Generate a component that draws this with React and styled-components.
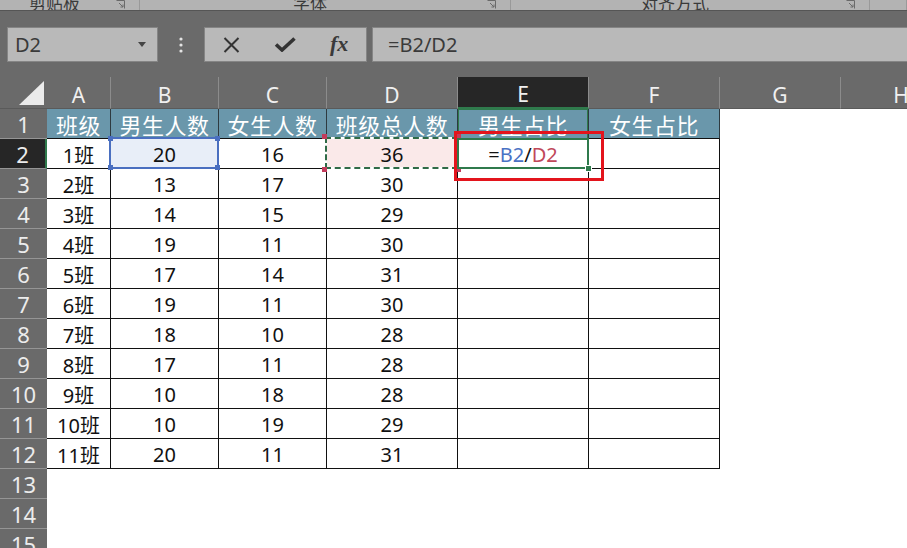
import React from 'react'
import styled, { createGlobalStyle, css } from 'styled-components'

const GlobalStyle = createGlobalStyle`
  html, body {
    margin: 0;
    padding: 0;
  }
  body {
    background: #6a6a6a;
    font-family: "Noto Sans", "Noto Sans CJK SC", sans-serif;
    overflow: hidden;
  }
`

const Window = styled.div`
  width: 907px;
  height: 548px;
  overflow: hidden;
  display: flex;
  flex-direction: column;
  background: #6a6a6a;
`

// ribbon strip (only the bottom of the group captions is visible)
const Ribbon = styled.div`
  height: 10px;
  flex: none;
  display: flex;
  background: #b3b3b3;
  border-bottom: 1px solid #555;
  overflow: hidden;
`

const Group = styled.div`
  flex: ${p => (p.$w ? 'none' : '1')};
  width: ${p => (p.$w ? `${p.$w}px` : 'auto')};
  display: flex;
  align-items: flex-end;
  border-right: 1px solid #999;
`

const GroupLabel = styled.span`
  flex: 1;
  text-align: center;
  font-family: "Noto Sans CJK SC", sans-serif;
  font-size: 17px;
  line-height: 20px;
  color: #3a3a3a;
  margin-bottom: -3px;
`

const LauncherIcon = styled.svg`
  flex: none;
  width: 9px;
  height: 9px;
  margin: 0 14px 1px 7px;
`

// formula bar
const FormulaRow = styled.div`
  flex: none;
  display: flex;
  height: 35px;
  margin: 16px 0 15px 7px;
`

const Field = styled.div`
  box-sizing: border-box;
  background: #b9b9b9;
  border: 1px solid #858585;
  display: flex;
  align-items: center;
  color: #3a3a3a;
  font-size: 20px;
`

const NameBox = styled(Field)`
  width: 151px;
  justify-content: space-between;
  padding: 0 11px 0 7px;
`

const Grip = styled.div`
  width: 46px;
  display: flex;
  align-items: center;
  justify-content: center;
`

const FxBox = styled(Field)`
  width: 163px;
  display: grid;
  grid-template-columns: repeat(3, 1fr);
  justify-items: center;
`

const FxLabel = styled.span`
  font-family: "Liberation Serif", serif;
  font-style: italic;
  font-weight: bold;
  font-size: 22px;
  color: #3a3a3a;
  margin-top: -2px;
`

const FormulaInput = styled(Field)`
  flex: 1;
  margin: 0 -2px 0 5px;
  padding-left: 15px;
`

// sheet
const Sheet = styled.div`
  position: relative;
  flex: none;
  display: grid;
  grid-template-columns: 47px 64px 108px 108px 131px 131px 131px 121px 121px;
  grid-template-rows: 32px;
  grid-auto-rows: 30px;
  background: #fff;
`

const Corner = styled.div`
  background: #6a6a6a;
  border-bottom: 1px solid #5a5a5a;
  display: flex;
  align-items: flex-end;
  justify-content: flex-end;
  padding: 0 3px 3px 0;
`

const ColHead = styled.div`
  box-sizing: border-box;
  background: ${p => (p.$active ? '#262626' : '#6a6a6a')};
  color: #f0f0f0;
  font-size: 21px;
  display: flex;
  align-items: center;
  justify-content: center;
  padding-top: 4px;
  border-right: 1px solid #8c8c8c;
  border-bottom: ${p => (p.$active ? '2px solid #2f7a4c' : '1px solid #5a5a5a')};
`

const RowHead = styled.div`
  box-sizing: border-box;
  background: ${p => (p.$active ? '#262626' : '#6a6a6a')};
  color: #ececec;
  font-size: 22px;
  display: flex;
  align-items: center;
  justify-content: center;
  padding-top: 1px;
  border-bottom: 1px solid #959595;
  border-right: ${p => (p.$active ? '2px solid #2f7a4c' : 'none')};
`

const Cell = styled.div`
  position: relative;
  box-sizing: border-box;
  display: flex;
  align-items: center;
  justify-content: center;
  background: ${p => p.$fill || '#fff'};
  color: #111;
  font-size: 20px;
  padding-top: 2px;
  ${p =>
    p.$table &&
    css`
      border-right: 1px solid #111;
      border-bottom: 1px solid #111;
    `}
  ${p =>
    p.$head &&
    css`
      background: #6a97ab;
      color: #fff;
      font-family: "Noto Sans CJK SC", sans-serif;
      font-size: 22px;
      letter-spacing: 0.5px;
      padding-top: 0;
      border-right-color: #2e3a40;
    `}
  ${p =>
    p.$picked &&
    css`
      box-shadow: inset 1px 1px 0 #2f7a4c, inset -1px 0 0 #2f7a4c;
    `}
`

const CellLabel = styled.span`
  position: relative;
  z-index: 1;
`

const Ref = styled.span`
  color: ${p => p.$color || '#111'};
`

const RefFrame = styled.div`
  position: absolute;
  left: -2px;
  top: -2px;
  right: -1px;
  bottom: -1px;
  pointer-events: none;
  z-index: 2;
  ${p =>
    p.$dashed
      ? css`
          &::before,
          &::after {
            content: '';
            position: absolute;
            inset: 0;
          }
          &::before {
            border: 2px solid #fff;
          }
          &::after {
            border: 2px dashed #2f6b47;
          }
        `
      : css`
          border: 2px solid ${p.$color};
        `}
`

const Handle = styled.span`
  position: absolute;
  z-index: 1;
  width: 5px;
  height: 5px;
  background: ${p => p.$color};
  ${p => (p.$top ? 'top: -3px;' : 'bottom: -3px;')}
  ${p => (p.$left ? 'left: -3px;' : 'right: -3px;')}
`

const ActiveFrame = styled.div`
  position: absolute;
  left: -1px;
  top: -1px;
  right: -1px;
  bottom: -1px;
  border: 2px solid #2f7a4c;
  z-index: 2;
`

const FillHandle = styled.span`
  position: absolute;
  right: -5px;
  bottom: -5px;
  width: 5px;
  height: 5px;
  background: #2f7a4c;
  border: 1px solid #fff;
`

const Callout = styled.div`
  position: absolute;
  left: 454px;
  top: 54px;
  width: 150px;
  height: 50px;
  box-sizing: border-box;
  border: 3px solid #e3141c;
  z-index: 3;
`

const columns = ['A', 'B', 'C', 'D', 'E', 'F', 'G', 'H']
const headers = ['班级', '男生人数', '女生人数', '班级总人数', '男生占比', '女生占比']
const rows = [
  ['1班', 20, 16, 36],
  ['2班', 13, 17, 30],
  ['3班', 14, 15, 29],
  ['4班', 19, 11, 30],
  ['5班', 17, 14, 31],
  ['6班', 19, 11, 30],
  ['7班', 18, 10, 28],
  ['8班', 17, 11, 28],
  ['9班', 10, 18, 28],
  ['10班', 10, 19, 29],
  ['11班', 20, 11, 31],
]

const Handles = ({ color }) => (
  <>
    <Handle $color={color} $top $left />
    <Handle $color={color} $top />
    <Handle $color={color} $left />
    <Handle $color={color} />
  </>
)

const Launcher = () => (
  <LauncherIcon viewBox="0 0 9 9">
    <path d="M0.5 0.5h8v8" fill="none" stroke="#6a6a6a" strokeWidth="1" />
    <path d="M3 3l4 4M4.5 7H7V4.5" fill="none" stroke="#6a6a6a" strokeWidth="1" />
  </LauncherIcon>
)

function renderCell(r, c) {
  const key = `${r}-${c}`
  const inTable = c < 6 && r <= 12

  if (r === 1) {
    if (!inTable) return <Cell key={key} />
    return (
      <Cell key={key} $table $head $picked={c === 4}>
        {headers[c]}
      </Cell>
    )
  }

  if (!inTable) return <Cell key={key} />

  const data = rows[r - 2]
  const value = c < 4 ? data[c] : ''

  if (r === 2 && c === 1) {
    return (
      <Cell key={key} $table $fill="#e8eef8">
        <CellLabel>{value}</CellLabel>
        <RefFrame $color="#4a6fc0">
          <Handles color="#4a6fc0" />
        </RefFrame>
      </Cell>
    )
  }
  if (r === 2 && c === 3) {
    return (
      <Cell key={key} $table $fill="#fae9e9">
        <CellLabel>{value}</CellLabel>
        <RefFrame $dashed>
          <Handles color="#c23b5b" />
        </RefFrame>
      </Cell>
    )
  }
  if (r === 2 && c === 4) {
    return (
      <Cell key={key} $table>
        <CellLabel>
          =<Ref $color="#4a72c4">B2</Ref>/<Ref $color="#c0485a">D2</Ref>
        </CellLabel>
        <ActiveFrame>
          <FillHandle />
        </ActiveFrame>
      </Cell>
    )
  }
  return (
    <Cell key={key} $table>
      {value}
    </Cell>
  )
}

export default function App() {
  const body = []
  for (let r = 1; r <= 15; r++) {
    body.push(
      <RowHead key={`h${r}`} $active={r === 2}>
        {r}
      </RowHead>
    )
    for (let c = 0; c < columns.length; c++) body.push(renderCell(r, c))
  }

  return (
    <Window>
      <GlobalStyle />
      <Ribbon>
        <Group $w={139}>
          <GroupLabel>剪贴板</GroupLabel>
          <Launcher />
        </Group>
        <Group $w={370}>
          <GroupLabel>字体</GroupLabel>
          <Launcher />
        </Group>
        <Group $w={358}>
          <GroupLabel>对齐方式</GroupLabel>
          <Launcher />
        </Group>
        <Group />
      </Ribbon>

      <FormulaRow>
        <NameBox>
          <span>D2</span>
          <svg width="8" height="5" viewBox="0 0 8 5">
            <path d="M0 0h8L4 5z" fill="#444" />
          </svg>
        </NameBox>
        <Grip>
          <svg width="4" height="16" viewBox="0 0 4 16">
            <circle cx="2" cy="2" r="1.6" fill="#e4e4e4" />
            <circle cx="2" cy="8" r="1.6" fill="#e4e4e4" />
            <circle cx="2" cy="14" r="1.6" fill="#e4e4e4" />
          </svg>
        </Grip>
        <FxBox>
          <svg width="17" height="16" viewBox="0 0 17 16">
            <path d="M1.5 1l14 14M15.5 1l-14 14" stroke="#333" strokeWidth="2" />
          </svg>
          <svg width="22" height="15" viewBox="0 0 22 15">
            <path d="M2 7.5l6 5.5L20.5 1.5" fill="none" stroke="#333" strokeWidth="3.6" />
          </svg>
          <FxLabel>fx</FxLabel>
        </FxBox>
        <FormulaInput>=B2/D2</FormulaInput>
      </FormulaRow>

      <Sheet>
        <Corner>
          <svg width="25" height="24" viewBox="0 0 25 24">
            <path d="M25 0V24H0z" fill="#ebebeb" />
          </svg>
        </Corner>
        {columns.map(col => (
          <ColHead key={col} $active={col === 'E'}>
            {col}
          </ColHead>
        ))}
        {body}
        <Callout />
      </Sheet>
    </Window>
  )
}
